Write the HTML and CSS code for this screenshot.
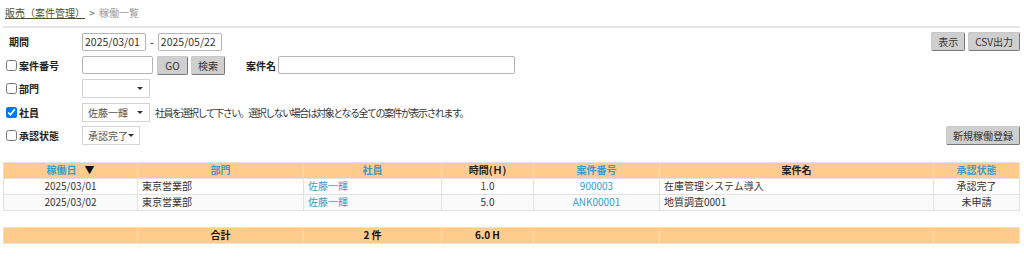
FILE: index.html
```html
<!DOCTYPE html>
<html lang="ja">
<head>
  <meta charset="UTF-8">
  <title>稼働一覧</title>
  <link rel="stylesheet" href="styles.css">
</head>
<body>
  <div class="breadcrumb">
    <a href="#" class="crumb-link">販売（案件管理）</a>
    <span class="crumb-sep">&gt;</span>
    <span class="crumb-current">稼働一覧</span>
  </div>

  <div class="search">
    <div class="row">
      <span class="label label-plain">期間</span>
      <span class="input date">2025/03/01</span>
      <span class="dash">-</span>
      <span class="input date">2025/05/22</span>
      <div class="right">
        <button class="btn">表示</button>
        <button class="btn">CSV出力</button>
      </div>
    </div>

    <div class="row">
      <label class="label"><input type="checkbox">案件番号</label>
      <span class="input num"></span>
      <button class="btn btn-go">GO</button>
      <button class="btn">検索</button>
      <span class="sublabel">案件名</span>
      <span class="input name"></span>
    </div>

    <div class="row">
      <label class="label"><input type="checkbox">部門</label>
      <span class="select sel-dept"><span></span><i class="caret"></i></span>
    </div>

    <div class="row">
      <label class="label"><input type="checkbox" checked>社員</label>
      <span class="select sel-emp"><span>佐藤一輝</span><i class="caret"></i></span>
      <span class="note">社員を選択して下さい。選択しない場合は対象となる全ての案件が表示されます。</span>
    </div>

    <div class="row">
      <label class="label"><input type="checkbox">承認状態</label>
      <span class="select sel-status"><span>承認完了</span><i class="caret"></i></span>
      <div class="right">
        <button class="btn">新規稼働登録</button>
      </div>
    </div>
  </div>

  <table class="list">
    <colgroup>
      <col style="width:134px"><col style="width:166px"><col style="width:138px">
      <col style="width:92px"><col style="width:126px"><col style="width:274px"><col>
    </colgroup>
    <thead>
      <tr>
        <th><a href="#">稼働日</a><span class="sort">▼</span></th>
        <th><a href="#">部門</a></th>
        <th><a href="#">社員</a></th>
        <th>時間(Ｈ)</th>
        <th><a href="#">案件番号</a></th>
        <th>案件名</th>
        <th><a href="#">承認状態</a></th>
      </tr>
    </thead>
    <tbody>
      <tr>
        <td class="c">2025/03/01</td>
        <td>東京営業部</td>
        <td><a href="#">佐藤一輝</a></td>
        <td class="c">1.0</td>
        <td class="c"><a href="#">900003</a></td>
        <td>在庫管理システム導入</td>
        <td class="c">承認完了</td>
      </tr>
      <tr>
        <td class="c">2025/03/02</td>
        <td>東京営業部</td>
        <td><a href="#">佐藤一輝</a></td>
        <td class="c">5.0</td>
        <td class="c"><a href="#">ANK00001</a></td>
        <td>地質調査0001</td>
        <td class="c">未申請</td>
      </tr>
    </tbody>
  </table>

  <table class="list total">
    <colgroup>
      <col style="width:134px"><col style="width:166px"><col style="width:138px">
      <col style="width:92px"><col style="width:126px"><col style="width:274px"><col>
    </colgroup>
    <tr>
      <td></td>
      <td>合計</td>
      <td>2 件</td>
      <td>6.0 H</td>
      <td></td>
      <td></td>
      <td></td>
    </tr>
  </table>
</body>
</html>
```

FILE: styles.css
```css
body {
  margin: 0;
  padding: 0 4px 0 3px;
  font-family: "Noto Sans CJK JP", "Noto Sans", sans-serif;
  font-size: 10px;
  color: #222;
  background-color: #fff;
}
.breadcrumb {
  height: 26px;
  line-height: 26px;
  padding-left: 2px;
  border-bottom: 2px solid #e6e6e6;
}
.crumb-link {
  color: #4f4f2a;
  text-decoration: underline;
}
.crumb-sep {
  color: #555;
  margin: 0 2px;
}
.crumb-current {
  color: #999;
}
.search {
  padding-top: 2px;
}
.row {
  display: flex;
  align-items: center;
  height: 23.5px;
}
.label {
  width: 79px;
  display: flex;
  align-items: center;
  font-weight: bold;
}
.label input {
  width: 11px;
  height: 11px;
  margin: 0 2px 0 3px;
}
.label-plain {
  padding-left: 6px;
  width: 73px;
}
.input {
  display: inline-block;
  box-sizing: border-box;
  height: 18px;
  line-height: 16px;
  border: 1px solid #b4b4b4;
  border-radius: 2px;
  background-color: #fff;
  font-size: 10.5px;
  padding: 0 2px;
  color: #333;
  white-space: nowrap;
}
.date {
  width: 64px;
}
.dash {
  margin: 0 4px;
  font-size: 11px;
}
.num {
  width: 71px;
  margin-right: 4px;
}
.name {
  width: 237px;
}
.sublabel {
  font-weight: bold;
  margin: 0 2px 0 18px;
}
.btn {
  height: 19px;
  padding: 0 6px;
  margin-right: 3px;
  font-family: inherit;
  font-size: 10px;
  color: #333;
  background-color: #cfcfcf;
  border: 1px solid #c8c8c8;
  border-right-color: #777;
  border-bottom-color: #777;
  border-radius: 2px;
}
.btn-go {
  width: 31px;
}
.right {
  margin-left: auto;
  display: flex;
}
.right .btn {
  margin: 0 0 0 3px;
}
.select {
  display: inline-flex;
  align-items: center;
  justify-content: space-between;
  box-sizing: border-box;
  height: 19px;
  padding: 0 6px 0 5px;
  border: 1px solid #d4d4d4;
  background-color: #fff;
  font-size: 10px;
  color: #555;
  white-space: nowrap;
}
.sel-dept, .sel-emp {
  width: 68px;
}
.sel-status {
  width: 58px;
}
.caret {
  width: 0;
  height: 0;
  border-left: 3px solid transparent;
  border-right: 3px solid transparent;
  border-top: 3px solid #333;
}
.note {
  margin-left: 5px;
  color: #333;
  letter-spacing: -1.5px;
}
.list {
  width: 1017px;
  border-collapse: collapse;
  table-layout: fixed;
  margin-top: 14px;
}
.list th, .list td {
  height: 15px;
  padding: 0 4px;
  border: 1px solid #e2e2e2;
  font-size: 10px;
  line-height: 14px;
  white-space: nowrap;
}
.list th {
  background-color: #ffcc8e;
  font-weight: bold;
  text-align: center;
}
.list a {
  color: #3a9ccc;
  text-decoration: none;
}
.sort {
  margin-left: 8px;
  font-size: 10px;
  color: #111;
}
.list td {
  color: #333;
}
.list td.c {
  text-align: center;
}
.list tbody tr:nth-child(2) td {
  background-color: #fafafa;
}
.total {
  margin-top: 16px;
}
.total td {
  background-color: #ffcc8e;
  font-weight: bold;
  text-align: center;
  color: #111;
}
```
